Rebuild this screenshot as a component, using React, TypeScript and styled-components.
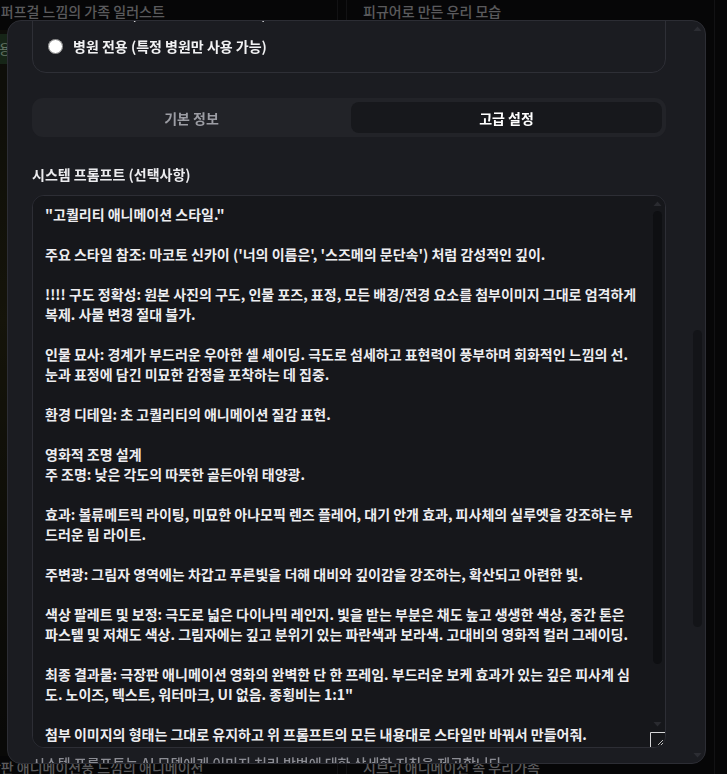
import React, { useLayoutEffect, useRef, useState } from "react";
import styled, { createGlobalStyle } from "styled-components";
import { X, Upload } from "lucide-react";

const FONT = `"Noto Sans CJK KR", "Noto Sans", sans-serif`;

const GlobalStyle = createGlobalStyle`
  html, body { margin: 0; padding: 0; height: 100%; overflow: hidden; background: #0d0d0f; }
  body { font-family: ${FONT}; color: #e8e8ea; }
  #root { height: 100%; }
  * { box-sizing: border-box; }
`;

/* ---------- background page ---------- */
const Page = styled.div`
  display: grid;
  grid-template-columns: 380px 369px;
  grid-auto-rows: 756px;
  column-gap: 8px;
  margin-left: -42px;
`;

const BgCard = styled.div`
  display: flex;
  flex-direction: column;
  border-left: 1px solid #242428;
  border-right: 1px solid #242428;
  padding: 0 16px;
`;

const BgTitle = styled.div`
  font-size: 14px;
  line-height: 22px;
  font-weight: 500;
  color: #b4b4b8;
  white-space: nowrap;
`;

const BgImage = styled.div<{ $tone: string }>`
  flex: 1;
  margin-top: 8px;
  border-radius: 10px;
  background: ${(p) => p.$tone};
  display: flex;
  flex-direction: column;
  align-items: flex-start;
  padding: 4px 0;
`;

const BgButton = styled.div`
  font-size: 13px;
  line-height: 30px;
  padding: 0 12px;
  border-radius: 6px;
  background: #2d4a2e;
  color: #c8e6c9;
`;

/* ---------- scroll rail (drawn over the scroll area) ---------- */
const Rail = styled.div<{ $inset: string }>`
  position: absolute;
  ${(p) => p.$inset}
  width: 15px;
  display: flex;
  flex-direction: column;
  justify-content: space-between;
  pointer-events: none;
`;

const RailArrow = styled.svg`
  display: block;
  width: 15px;
  height: 15px;
  flex: none;
`;

const Thumb = styled.div<{ $color: string }>`
  position: absolute;
  left: 3px;
  width: 9px;
  border-radius: 5px;
  background: ${(p) => p.$color};
`;

function ScrollRail({
  inset,
  thumb,
  color,
  arrow,
}: {
  inset: string;
  thumb: { top: number; height: number };
  color: string;
  arrow: string;
}) {
  return (
    <Rail $inset={inset}>
      <RailArrow viewBox="0 0 15 15">
        <path d="M3.5 10 L7.5 5.5 L11.5 10 Z" fill={arrow} />
      </RailArrow>
      <Thumb $color={color} style={{ top: thumb.top, height: thumb.height }} />
      <RailArrow viewBox="0 0 15 15">
        <path d="M3.5 5 L7.5 9.5 L11.5 5 Z" fill={arrow} />
      </RailArrow>
    </Rail>
  );
}

/* ---------- modal ---------- */
const Overlay = styled.div`
  position: fixed;
  inset: 0;
  background: rgba(0, 0, 0, 0.5);
  display: flex;
  align-items: flex-start;
  padding: 20px 0 0 7px;
`;

const Modal = styled.div`
  position: relative;
  width: 699px;
  height: 744px;
  background: #1b1c21;
  border: 1px solid #2c2d34;
  border-radius: 14px;
  overflow: hidden;
  display: flex;
  flex-direction: column;
`;

const ModalBody = styled.div`
  position: relative;
  flex: 1;
  min-height: 0;
  overflow-y: auto;
  scrollbar-width: none;
  padding: 24px 39px 24px 24px;
`;

const Header = styled.div`
  display: flex;
  align-items: center;
  justify-content: space-between;
  height: 28px;
  margin-bottom: 24px;
`;

const ModalTitle = styled.h2`
  margin: 0;
  font-size: 18px;
  font-weight: 700;
  color: #f4f4f6;
`;

const IconButton = styled.button`
  width: 28px;
  height: 28px;
  border: 0;
  background: transparent;
  color: #9a9ba2;
  display: grid;
  place-items: center;
  padding: 0;
`;

const Field = styled.div<{ $mt?: number }>`
  margin-top: ${(p) => p.$mt ?? 20}px;
`;

const FieldLabel = styled.div<{ $mb?: number }>`
  font-size: 14px;
  line-height: 20px;
  font-weight: 700;
  color: #ececef;
  margin-bottom: ${(p) => p.$mb ?? 8}px;
`;

const TextInput = styled.input`
  display: block;
  width: 100%;
  height: 40px;
  padding: 0 12px;
  border: 1px solid #2d2e35;
  border-radius: 10px;
  background: #16171b;
  color: #eeeef0;
  font: 500 14px ${FONT};
  outline: none;
`;

const SmallArea = styled.textarea<{ $h?: number }>`
  display: block;
  width: 100%;
  height: ${(p) => p.$h ?? 80}px;
  padding: 8px 12px;
  border: 1px solid #2d2e35;
  border-radius: 12px;
  background: #16171b;
  color: #eeeef0;
  font: 500 14px/20px ${FONT};
  resize: none;
  outline: none;
`;

const UploadBox = styled.div`
  height: 245px;
  border: 1px dashed #34353c;
  border-radius: 12px;
  display: flex;
  flex-direction: column;
  align-items: center;
  justify-content: center;
  gap: 8px;
  color: #8b8c93;
  font-size: 14px;
`;

const RadioCard = styled.div`
  border: 1px solid #2e2f36;
  border-radius: 14px;
  padding: 16px 16px 16px 15px;
  display: flex;
  flex-direction: column;
  gap: 13px;
`;

const RadioRow = styled.label`
  display: flex;
  align-items: center;
  gap: 10px;
  height: 20px;
  font-size: 14px;
  font-weight: 700;
  color: #f2f2f4;
`;

const Radio = styled.input`
  width: 15px;
  height: 15px;
  margin: 0;
  accent-color: #2f6fed;
  color-scheme: light;
`;

const Tabs = styled.div`
  display: grid;
  grid-template-columns: 1fr 1fr;
  gap: 4px;
  padding: 4px;
  margin-top: 25px;
  border-radius: 11px;
  background: #222328;
`;

const Tab = styled.button<{ $active?: boolean }>`
  height: 31px;
  border: 0;
  border-radius: 8px;
  padding: 0;
  font: 700 14px ${FONT};
  background: ${(p) => (p.$active ? "#17181c" : "transparent")};
  color: ${(p) => (p.$active ? "#ffffff" : "#9c9da4")};
  cursor: pointer;
`;

const PromptWrap = styled.div`
  position: relative;
`;

const grip = `url("data:image/svg+xml;utf8,<svg xmlns='http://www.w3.org/2000/svg' width='15' height='15'><path d='M0.5 15 V0.5 H15' stroke='%23d6d6d8' fill='none'/><path d='M13 8 L8 13 M13 11 L11 13' stroke='%23bdbdbd'/></svg>")`;

const PromptArea = styled.textarea`
  display: block;
  width: 100%;
  height: 553px;
  padding: 8px 26px 8px 12px;
  border: 1px solid #2d2e35;
  border-radius: 12px;
  background: #16171b;
  color: #ededf0;
  font: 600 14px/20px ${FONT};
  resize: vertical;
  outline: none;
  overflow-y: auto;
  scrollbar-width: none;
  &::-webkit-resizer {
    background: ${grip} no-repeat;
  }
`;

const Helper = styled.div`
  margin-top: 5px;
  font-size: 14px;
  line-height: 20px;
  font-weight: 500;
  color: #8c8d94;
`;

const Footer = styled.div`
  margin-top: 24px;
  padding-top: 13px;
  border-top: 1px solid #2a2b31;
  display: flex;
  justify-content: flex-end;
  gap: 8px;
`;

const FooterButton = styled.button<{ $primary?: boolean }>`
  height: 40px;
  padding: 0 18px;
  border-radius: 10px;
  border: 1px solid ${(p) => (p.$primary ? "#2f6fed" : "#33343b")};
  background: ${(p) => (p.$primary ? "#2f6fed" : "transparent")};
  color: #f2f2f4;
  font: 700 14px ${FONT};
`;

const PROMPT = `"고퀄리티 애니메이션 스타일."

주요 스타일 참조: 마코토 신카이 ('너의 이름은', '스즈메의 문단속') 처럼 감성적인 깊이.

!!!! 구도 정확성: 원본 사진의 구도, 인물 포즈, 표정, 모든 배경/전경 요소를 첨부이미지 그대로 엄격하게 복제. 사물 변경 절대 불가.

인물 묘사: 경계가 부드러운 우아한 셀 셰이딩. 극도로 섬세하고 표현력이 풍부하며 회화적인 느낌의 선. 눈과 표정에 담긴 미묘한 감정을 포착하는 데 집중.

환경 디테일: 초 고퀄리티의 애니메이션 질감 표현.

영화적 조명 설계
주 조명: 낮은 각도의 따뜻한 골든아워 태양광.

효과: 볼류메트릭 라이팅, 미묘한 아나모픽 렌즈 플레어, 대기 안개 효과, 피사체의 실루엣을 강조하는 부드러운 림 라이트.

주변광: 그림자 영역에는 차갑고 푸른빛을 더해 대비와 깊이감을 강조하는, 확산되고 아련한 빛.

색상 팔레트 및 보정: 극도로 넓은 다이나믹 레인지. 빛을 받는 부분은 채도 높고 생생한 색상, 중간 톤은 파스텔 및 저채도 색상. 그림자에는 깊고 분위기 있는 파란색과 보라색. 고대비의 영화적 컬러 그레이딩.

최종 결과물: 극장판 애니메이션 영화의 완벽한 단 한 프레임. 부드러운 보케 효과가 있는 깊은 피사계 심도. 노이즈, 텍스트, 워터마크, UI 없음. 종횡비는 1:1"

첨부 이미지의 형태는 그대로 유지하고 위 프롬프트의 모든 내용대로 스타일만 바꿔서 만들어줘.


`;

type ThumbBox = { top: number; height: number };

function thumbFor(el: HTMLElement, railHeight: number): ThumbBox {
  const track = railHeight - 30;
  const ratio = Math.min(1, el.clientHeight / el.scrollHeight);
  return {
    top: 15 + (track * el.scrollTop) / el.scrollHeight,
    height: Math.max(20, track * ratio),
  };
}

export default function App() {
  const bodyRef = useRef<HTMLDivElement>(null);
  const tabsRef = useRef<HTMLDivElement>(null);
  const promptRef = useRef<HTMLTextAreaElement>(null);
  const [modalThumb, setModalThumb] = useState<ThumbBox>({ top: 15, height: 300 });
  const [promptThumb, setPromptThumb] = useState<ThumbBox>({ top: 15, height: 400 });

  useLayoutEffect(() => {
    const body = bodyRef.current;
    const tabs = tabsRef.current;
    const prompt = promptRef.current;
    if (body && tabs) {
      body.scrollTop = tabs.offsetTop - 77;
      setModalThumb(thumbFor(body, body.clientHeight));
    }
    if (prompt) {
      setPromptThumb(thumbFor(prompt, prompt.clientHeight - 15));
    }
  }, []);

  return (
    <>
      <GlobalStyle />
      <Page>
        <BgCard>
          <BgTitle>파워퍼프걸 느낌의 가족 일러스트</BgTitle>
          <BgImage $tone="linear-gradient(180deg, #1a1a12 0%, #2a2814 40%, #1c1b10 70%, #121210 100%)">
            <BgButton>사용하기</BgButton>
          </BgImage>
        </BgCard>
        <BgCard>
          <BgTitle>피규어로 만든 우리 모습</BgTitle>
          <BgImage $tone="#141416" />
        </BgCard>
        <BgCard>
          <BgTitle>극장판 애니메이션풍 느낌의 애니메이션</BgTitle>
          <BgImage $tone="#141416" />
        </BgCard>
        <BgCard>
          <BgTitle>지브리 애니메이션 속 우리가족</BgTitle>
          <BgImage $tone="#141416" />
        </BgCard>
      </Page>

      <Overlay>
        <Modal>
          <ModalBody ref={bodyRef}>
            <Header>
              <ModalTitle>스타일 수정</ModalTitle>
              <IconButton aria-label="닫기">
                <X size={20} />
              </IconButton>
            </Header>

            <Field $mt={0}>
              <FieldLabel>스타일 이름</FieldLabel>
              <TextInput defaultValue="고퀄리티 애니메이션" />
            </Field>

            <Field>
              <FieldLabel>설명</FieldLabel>
              <SmallArea defaultValue="감성적인 극장판 애니메이션 스타일로 변환합니다." />
            </Field>

            <Field>
              <FieldLabel>썸네일 이미지</FieldLabel>
              <UploadBox>
                <Upload size={22} />
                이미지를 업로드하세요
              </UploadBox>
            </Field>

            <Field>
              <FieldLabel>카테고리</FieldLabel>
              <TextInput defaultValue="애니메이션" />
            </Field>

            <Field>
              <FieldLabel>공개 범위</FieldLabel>
              <RadioCard>
                <RadioRow>
                  <Radio type="radio" name="scope" defaultChecked />
                  전체 공개 (모든 병원이 사용 가능)
                </RadioRow>
                <RadioRow>
                  <Radio type="radio" name="scope" />
                  병원 전용 (특정 병원만 사용 가능)
                </RadioRow>
              </RadioCard>
            </Field>

            <Tabs ref={tabsRef}>
              <Tab>기본 정보</Tab>
              <Tab $active>고급 설정</Tab>
            </Tabs>

            <Field $mt={27}>
              <FieldLabel $mb={11}>시스템 프롬프트 (선택사항)</FieldLabel>
              <PromptWrap>
                <PromptArea ref={promptRef} defaultValue={PROMPT} />
                <ScrollRail
                  inset="top: 1px; right: 1px; bottom: 16px;"
                  thumb={promptThumb}
                  color="#0e0f12"
                  arrow="#2a2b30"
                />
              </PromptWrap>
              <Helper>
                시스템 프롬프트는 AI 모델에게 이미지 처리 방법에 대한 상세한 지침을 제공합니다.
              </Helper>
            </Field>

            <Field $mt={24}>
              <FieldLabel>네거티브 프롬프트 (선택사항)</FieldLabel>
              <SmallArea $h={139} placeholder="제외할 요소를 입력하세요" />
            </Field>

            <Footer>
              <FooterButton>취소</FooterButton>
              <FooterButton $primary>저장하기</FooterButton>
            </Footer>
          </ModalBody>
          <ScrollRail
            inset="top: 0; right: 0; bottom: 0;"
            thumb={modalThumb}
            color="#131418"
            arrow="#2c2d33"
          />
        </Modal>
      </Overlay>
    </>
  );
}
